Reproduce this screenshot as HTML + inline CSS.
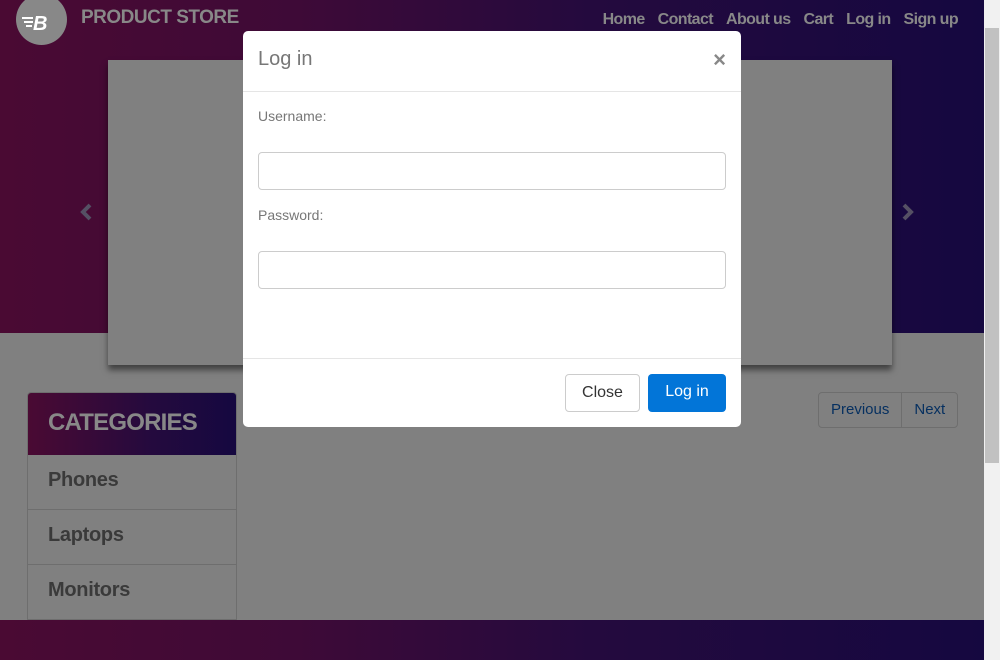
<!DOCTYPE html>
<html><head><style>
*{box-sizing:border-box;margin:0;padding:0}
body{width:1000px;height:660px;overflow:hidden;position:relative;background:#fff;font-family:"Liberation Sans",sans-serif}
.hdr{position:absolute;left:0;top:0;width:984px;height:333px;background:linear-gradient(90deg,#4a0a33 0%,#3e0a37 30%,#240a3e 60%,#150840 100%);z-index:2}
.logo{position:absolute;left:16px;top:-6px;width:51px;height:51px;border-radius:50%;background:#888;z-index:3}
.brand{position:absolute;left:81px;top:7px;color:#888;font-weight:bold;font-size:19px;letter-spacing:-0.5px;z-index:3}
.nav{position:absolute;top:11px;right:42px;color:#888;font-weight:bold;font-size:16px;letter-spacing:-0.6px;z-index:3}
.nav span{margin-left:13px}
.car{position:absolute;left:108px;top:60px;width:784px;height:305px;background:#808080;box-shadow:0 5px 6px rgba(0,0,0,.5);z-index:3}
.arr{position:absolute;top:202px;z-index:3}
.cat{position:absolute;left:27px;top:392px;width:210px;height:232px;border:1px solid #6e6e6e;border-radius:4px;overflow:hidden;background:#808080;z-index:3}
.cat .h{height:62px;background:linear-gradient(90deg,#4a0a33,#240a3e 60%,#150840);color:#888;font-weight:bold;font-size:24px;padding:16px 20px;letter-spacing:-0.8px}
.cat .i{height:55px;border-bottom:1px solid #6e6e6e;padding:14px 20px;font-size:20px;font-weight:bold;color:#3a3a3a;letter-spacing:-0.3px}
.pg{position:absolute;left:818px;top:392px;height:36px;border:1px solid #6e6e6e;border-radius:4px;display:flex;font-size:15px;color:#063060;background:#808080;z-index:3}
.pg span{padding:8px 12px}
.ftr{position:absolute;left:0;top:620px;width:984px;height:40px;background:linear-gradient(90deg,#4a0a33,#3e0a37 30%,#240a3e 60%,#150840);z-index:3}
.ov{position:absolute;left:0;top:0;width:984px;height:660px;background:#808080;z-index:1}
.sb{position:absolute;left:984px;top:0;width:16px;height:660px;background:#f1f1f1;z-index:5}
.th{position:absolute;left:985px;top:28px;width:14px;height:435px;background:#c1c1c1;z-index:6}
.md{position:absolute;left:243px;top:31px;width:498px;height:396px;background:#fff;border-radius:5px;color:#777;z-index:10}
.md .t{position:absolute;left:15px;top:17px;font-size:20px}
.md .x{position:absolute;right:15px;top:16px;font-size:22px;font-weight:bold;color:#888}
.hl{position:absolute;left:0;width:100%;height:1px;background:#e5e5e5}
.lb{position:absolute;left:15px;font-size:14px}
.in{position:absolute;left:15px;width:468px;height:38px;border:1px solid #ccc;border-radius:4px}
.b{position:absolute;top:343px;height:38px;border-radius:4px;font-size:16px;padding:9px 0;text-align:center}
</style></head><body>
<div class="hdr"></div>
<div class="logo"><svg width="51" height="51" viewBox="0 0 51 51"><g fill="#fff"><rect x="6" y="23" width="11" height="2"/><rect x="8" y="27" width="9" height="2"/><rect x="10" y="31" width="6" height="2"/><text x="17" y="36" font-family="Liberation Sans" font-style="italic" font-weight="bold" font-size="20">B</text></g></svg></div>
<div class="brand">PRODUCT STORE</div>
<div class="nav"><span>Home</span><span>Contact</span><span>About us</span><span>Cart</span><span>Log in</span><span>Sign up</span></div>
<div class="car"></div>
<svg class="arr" style="left:79px" width="14" height="20" viewBox="0 0 14 20"><path d="M11 3 L4 10 L11 17" stroke="#555064" stroke-width="4" fill="none"/></svg>
<svg class="arr" style="left:901px" width="14" height="20" viewBox="0 0 14 20"><path d="M3 3 L10 10 L3 17" stroke="#555064" stroke-width="4" fill="none"/></svg>
<div class="cat"><div class="h">CATEGORIES</div><div class="i">Phones</div><div class="i">Laptops</div><div class="i">Monitors</div></div>
<div class="pg"><span style="border-right:1px solid #6e6e6e">Previous</span><span>Next</span></div>
<div class="ftr"></div>
<div class="ov"></div>
<div class="sb"></div><div class="th"></div>
<div class="md">
<div class="t">Log in</div><div class="x">×</div>
<div class="hl" style="top:60px"></div>
<div class="lb" style="top:77px">Username:</div>
<div class="in" style="top:121px"></div>
<div class="lb" style="top:176px">Password:</div>
<div class="in" style="top:220px"></div>
<div class="hl" style="top:327px"></div>
<div class="b" style="left:322px;width:75px;border:1px solid #ccc;color:#333">Close</div>
<div class="b" style="left:405px;width:78px;background:#0275d8;color:#fff">Log in</div>
</div>
</body></html>
